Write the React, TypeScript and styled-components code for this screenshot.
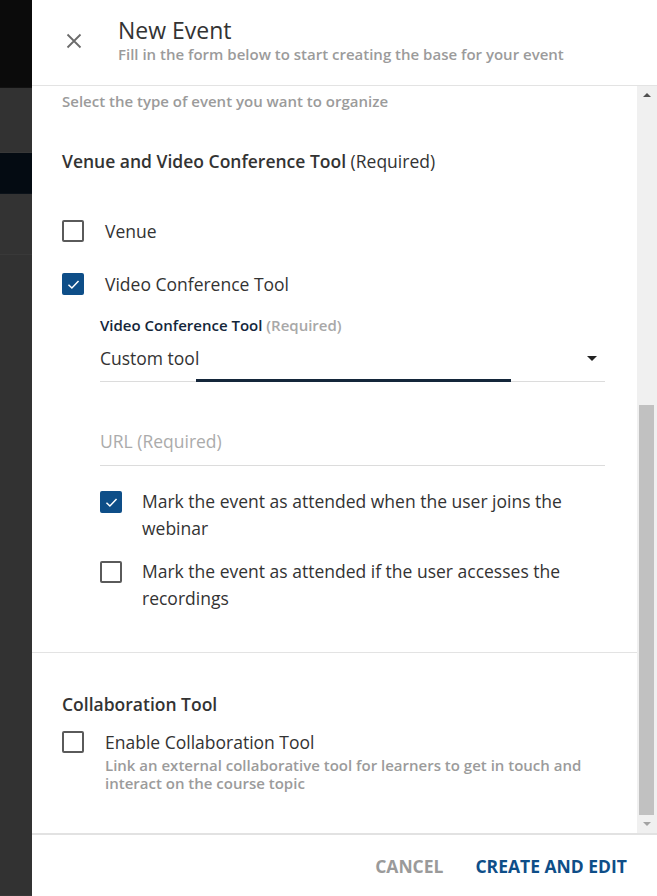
import { useLayoutEffect, useRef } from "react";
import styled, { createGlobalStyle } from "styled-components";

const BLUE = "#0e4e88";
const NAVY = "#14263a";
const TEXT = "#333333";
const MUTED = "#9b9b9b";

const Global = createGlobalStyle`
  html, body { margin: 0; padding: 0; }
  body {
    font-family: "Open Sans", "Noto Sans", sans-serif;
    background: #323232;
  }
`;

const Screen = styled.div`
  display: flex;
  width: 657px;
  height: 896px;
  overflow: hidden;
`;

const Backdrop = styled.div`
  width: 32px;
  display: flex;
  flex-direction: column;
  flex-shrink: 0;
`;

const Band = styled.div<{ h: number; bg: string }>`
  height: ${(p) => p.h}px;
  background: ${(p) => p.bg};
  border-bottom: 1px solid rgba(255, 255, 255, 0.03);
`;

const Panel = styled.div`
  flex: 1;
  background: #ffffff;
  display: flex;
  flex-direction: column;
  min-width: 0;
`;

const Header = styled.div`
  height: 86px;
  display: flex;
  align-items: flex-start;
  border-bottom: 1px solid #e3e3e3;
  box-sizing: border-box;
  padding: 15px 0 0 33px;
  gap: 35px;
`;

const CloseButton = styled.button`
  border: 0;
  background: none;
  padding: 0;
  margin-top: 17px;
  width: 18px;
  height: 18px;
  display: flex;
  align-items: center;
  justify-content: center;
  cursor: pointer;
`;

const Titles = styled.div`
  display: flex;
  flex-direction: column;
`;

const Title = styled.h1`
  margin: 0;
  font-size: 23px;
  line-height: 30px;
  font-weight: 400;
  color: ${TEXT};
`;

const Subtitle = styled.div`
  font-size: 15px;
  line-height: 19px;
  font-weight: 600;
  color: ${MUTED};
`;

const Body = styled.div`
  flex: 1;
  display: flex;
  min-height: 0;
  border-bottom: 2px solid #e2e2e2;
`;

const Scroller = styled.div`
  flex: 1;
  overflow: hidden;
`;

const Scrollbar = styled.div`
  width: 20px;
  background: #f0f0f0;
  display: flex;
  flex-direction: column;
  align-items: center;
`;

const Arrow = styled.div<{ down?: boolean }>`
  height: 18px;
  width: 100%;
  display: flex;
  align-items: center;
  justify-content: center;
  &::after {
    content: "";
    border-left: 4px solid transparent;
    border-right: 4px solid transparent;
    ${(p) =>
      p.down
        ? "border-top: 4px solid #a3a3a3;"
        : "border-bottom: 4px solid #505050;"}
  }
`;

const Track = styled.div`
  flex: 1;
  width: 100%;
  display: flex;
  flex-direction: column;
  justify-content: flex-end;
`;

const Thumb = styled.div`
  height: 410px;
  margin: 0 3px 0 2px;
  background: #c1c1c1;
`;

const Section = styled.section<{ top: number; bottom: number }>`
  padding: ${(p) => p.top}px 32px ${(p) => p.bottom}px 30px;
`;

const Divider = styled.hr`
  margin: 0;
  border: 0;
  border-top: 1px solid #e3e3e3;
`;

const Heading = styled.h2`
  margin: 0;
  font-size: 17.5px;
  line-height: 24px;
  font-weight: 600;
  color: ${TEXT};
  span { font-weight: 400; }
`;

const Hint = styled.p`
  margin: 5px 0 0;
  font-size: 15px;
  line-height: 20px;
  font-weight: 600;
  color: ${MUTED};
`;

const Options = styled.div<{ top: number }>`
  display: flex;
  flex-direction: column;
  margin-top: ${(p) => p.top}px;
`;

const Option = styled.label<{ gap: number; mt?: number }>`
  display: flex;
  align-items: flex-start;
  gap: ${(p) => p.gap}px;
  margin-top: ${(p) => p.mt ?? 0}px;
  cursor: pointer;
`;

const Box = styled.span<{ checked?: boolean; offset: number }>`
  flex-shrink: 0;
  width: 22px;
  height: 22px;
  box-sizing: border-box;
  border-radius: 2px;
  margin-top: ${(p) => p.offset}px;
  border: 2px solid ${(p) => (p.checked ? BLUE : "#5a5a5a")};
  background: ${(p) => (p.checked ? BLUE : "#fff")};
  display: flex;
  align-items: center;
  justify-content: center;
`;

const OptionText = styled.span`
  display: flex;
  flex-direction: column;
`;

const OptionLabel = styled.span<{ lh?: number }>`
  font-size: 17.5px;
  line-height: ${(p) => p.lh ?? 24}px;
  color: ${TEXT};
`;

const OptionHint = styled.span`
  margin-top: 2px;
  font-size: 15px;
  line-height: 18px;
  font-weight: 600;
  color: ${MUTED};
`;

const Nested = styled.div`
  padding-left: 38px;
  display: flex;
  flex-direction: column;
`;

const FieldLabel = styled.div`
  margin-top: 19px;
  font-size: 15px;
  line-height: 20px;
  font-weight: 600;
  color: ${NAVY};
  span { color: #a8a8a8; }
`;

const Select = styled.div`
  position: relative;
  height: 46px;
  display: flex;
  align-items: center;
  justify-content: space-between;
  border-bottom: 1px solid #dcdcdc;
  font-size: 17.5px;
  color: ${TEXT};
  padding-right: 8px;
  &::after {
    content: "";
    border-left: 5px solid transparent;
    border-right: 5px solid transparent;
    border-top: 5px solid #222;
  }
`;

const FocusBar = styled.div`
  position: absolute;
  left: 96px;
  width: 315px;
  bottom: -1px;
  height: 3px;
  background: ${NAVY};
`;

const UrlInput = styled.input`
  margin-top: 35px;
  height: 48px;
  border: 0;
  border-bottom: 1px solid #dcdcdc;
  padding: 0;
  font-family: inherit;
  font-size: 17.5px;
  color: ${TEXT};
  outline: none;
  &::placeholder { color: #ababab; }
`;

const Footer = styled.div`
  height: 61px;
  display: flex;
  align-items: center;
  justify-content: flex-end;
  gap: 32px;
  padding-right: 30px;
`;

const TextButton = styled.button<{ primary?: boolean }>`
  border: 0;
  background: none;
  padding: 0;
  font-family: inherit;
  font-size: 17.5px;
  font-weight: 700;
  color: ${(p) => (p.primary ? BLUE : "#9a9a9a")};
  cursor: pointer;
`;

function Check({ checked, offset = 1 }: { checked?: boolean; offset?: number }) {
  return (
    <Box checked={checked} offset={offset}>
      {checked && (
        <svg width="15" height="15" viewBox="0 0 14 14">
          <path d="M2.3 7.2 L5.5 10.3 L11.7 3.7" fill="none" stroke="#fff" strokeWidth="1.4" />
        </svg>
      )}
    </Box>
  );
}

export default function App() {
  const scroller = useRef<HTMLDivElement>(null);
  useLayoutEffect(() => {
    if (scroller.current) scroller.current.scrollTop = 48;
  }, []);

  return (
    <Screen>
      <Global />
      <Backdrop>
        <Band h={87} bg="#0b0b0b" />
        <Band h={65} bg="#323232" />
        <Band h={40} bg="#040b12" />
        <Band h={60} bg="#333333" />
        <Band h={644} bg="#323232" />
      </Backdrop>
      <Panel>
        <Header>
          <CloseButton aria-label="Close">
            <svg width="16" height="16" viewBox="0 0 16 16">
              <path d="M1.5 1.5 L14.5 14.5 M14.5 1.5 L1.5 14.5" stroke="#6b6b6b" strokeWidth="1.8" />
            </svg>
          </CloseButton>
          <Titles>
            <Title>New Event</Title>
            <Subtitle>Fill in the form below to start creating the base for your event</Subtitle>
          </Titles>
        </Header>
        <Body>
          <Scroller ref={scroller}>
            <Section top={24} bottom={0}>
              <Heading>Event Type</Heading>
              <Hint>Select the type of event you want to organize</Hint>
            </Section>
            <Section top={38} bottom={40}>
              <Heading>
                Venue and Video Conference Tool <span>(Required)</span>
              </Heading>
              <Options top={46}>
                <Option gap={21}>
                  <Check />
                  <OptionLabel>Venue</OptionLabel>
                </Option>
                <Option gap={21} mt={29}>
                  <Check checked />
                  <OptionLabel>Video Conference Tool</OptionLabel>
                </Option>
                <Nested>
                  <FieldLabel>
                    Video Conference Tool <span>(Required)</span>
                  </FieldLabel>
                  <Select>
                    Custom tool
                    <FocusBar />
                  </Select>
                  <UrlInput placeholder="URL (Required)" />
                  <Option gap={20} mt={22}>
                    <Check checked offset={3} />
                    <OptionLabel lh={27}>
                      Mark the event as attended when the user joins the webinar
                    </OptionLabel>
                  </Option>
                  <Option gap={20} mt={16}>
                    <Check offset={3} />
                    <OptionLabel lh={27}>
                      Mark the event as attended if the user accesses the recordings
                    </OptionLabel>
                  </Option>
                </Nested>
              </Options>
            </Section>
            <Divider />
            <Section top={39} bottom={60}>
              <Heading>Collaboration Tool</Heading>
              <Options top={14}>
                <Option gap={21}>
                  <Check />
                  <OptionText>
                    <OptionLabel>Enable Collaboration Tool</OptionLabel>
                    <OptionHint>
                      Link an external collaborative tool for learners to get in touch and
                      interact on the course topic
                    </OptionHint>
                  </OptionText>
                </Option>
              </Options>
            </Section>
          </Scroller>
          <Scrollbar>
            <Arrow />
            <Track>
              <Thumb />
            </Track>
            <Arrow down />
          </Scrollbar>
        </Body>
        <Footer>
          <TextButton>CANCEL</TextButton>
          <TextButton primary>CREATE AND EDIT</TextButton>
        </Footer>
      </Panel>
    </Screen>
  );
}
